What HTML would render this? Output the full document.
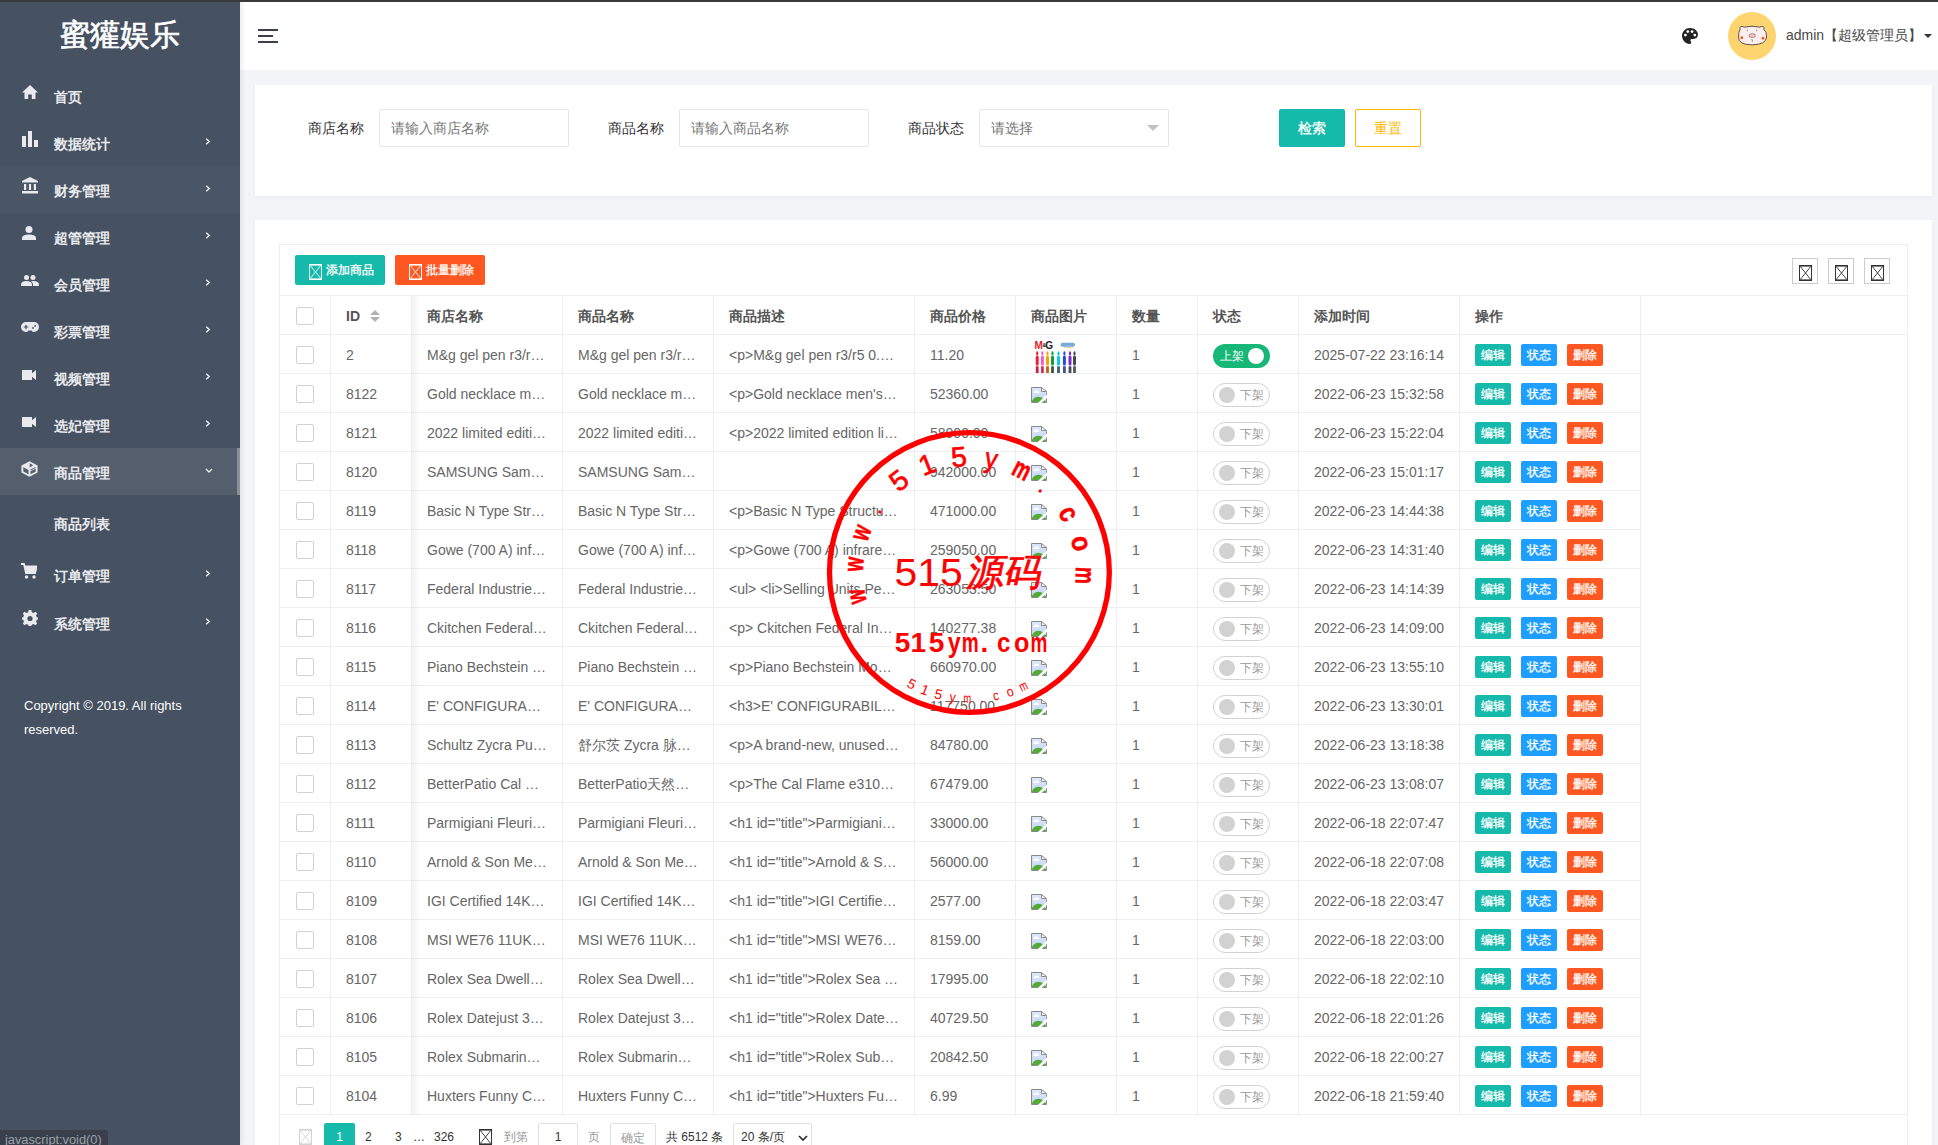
<!DOCTYPE html><html><head><meta charset="utf-8"><style>
*{margin:0;padding:0;box-sizing:border-box}
html,body{width:1938px;height:1145px;overflow:hidden}
body{position:relative;background:#f2f4f8;font-family:"Liberation Sans",sans-serif;font-size:14px;color:#666}
.abs{position:absolute}
#topbar{position:absolute;left:0;top:0;width:1938px;height:2px;background:#3a3a3a;z-index:50}
#side{position:absolute;left:0;top:0;width:240px;height:1145px;background:#465161;box-shadow:2px 0 5px rgba(0,0,0,.08);z-index:10}
#logo{position:absolute;left:0;top:13px;width:240px;text-align:center;color:#fff;font-size:30px;line-height:44px;-webkit-text-stroke:0.7px #fff}
.mi{position:absolute;left:0;width:240px;height:47px;color:#e8eaed;font-weight:bold;font-size:14px}
.mi .tx{position:absolute;left:54px;top:2px;line-height:47px;height:47px}
.mi .ic{position:absolute;left:22px}
.mi .ch{position:absolute;left:205px}
#hdr{position:absolute;left:240px;top:0;width:1698px;height:70px;background:#fff}
.card{position:absolute;background:#fff;box-shadow:0 1px 3px rgba(0,0,0,.05)}
.lbl{position:absolute;color:#333;font-size:14px;line-height:38px;top:109px}
.inp{position:absolute;top:109px;height:38px;width:190px;border:1px solid #e6e6e6;border-radius:2px;background:#fff;color:#777;line-height:36px;padding-left:11px;font-size:14px}
.btn{position:absolute;border-radius:2px;color:#fff;text-align:center;-webkit-text-stroke:0.3px currentColor}
.tb{position:absolute;left:279px;top:244px;width:1629px;height:920px;border:1px solid #eee;background:#fff}
.row{position:absolute;left:0;height:39px;border-bottom:1px solid #eee}
.c{position:absolute;top:0;height:38px;border-right:1px solid #eee;line-height:28px;padding:6px 15px;white-space:nowrap;overflow:hidden;font-size:14px;color:#666}
.th{font-weight:bold;color:#555}
.cb{position:absolute;left:16px;top:11px;width:18px;height:18px;border:1px solid #d2d2d2;border-radius:2px;background:#fff}
.sw{position:absolute;left:15px;top:9px;width:57px;height:24px;border-radius:20px;font-size:12px;line-height:22px}
.sw.on{background:#16b777;color:#fff}
.sw.off{border:1px solid #d2d2d2;color:#999}
.knob{position:absolute;top:4px;width:16px;height:16px;border-radius:50%}
.xs{position:absolute;top:9px;width:36px;height:22px;line-height:22px;font-size:12px;color:#fff;border-radius:2px;text-align:center;-webkit-text-stroke:0.3px #fff}
.pg{position:absolute;font-size:12px;color:#333;line-height:28px;top:1123px}
</style></head><body>
<div id="topbar"></div>
<div id="side">
<div id="logo">蜜獾娱乐</div>
<div class="abs" style="left:0;top:166px;width:240px;height:47px;background:#4a5566"></div>
<div class="abs" style="left:0;top:448px;width:240px;height:47px;background:#555e6d"></div>
<div class="abs" style="left:237px;top:448px;width:3px;height:47px;background:#8a919b"></div>
<div class="mi" style="top:72px"><div class="ic" style="top:13px;left:22px;line-height:0"><svg width="16" height="14" viewBox="0 0 16 14"><path d="M8 0L16 7.5H13.5V14H9.8V9.5H6.2V14H2.5V7.5H0Z" fill="#e8eaed"/></svg></div><div class="tx">首页</div>
</div>
<div class="mi" style="top:119px"><div class="ic" style="top:12px;left:22px;line-height:0"><svg width="16" height="16" viewBox="0 0 16 16"><rect x="0" y="5" width="4" height="11" fill="#e8eaed"/><rect x="6" y="0" width="4" height="16" fill="#e8eaed"/><rect x="12" y="9" width="4" height="7" fill="#e8eaed"/></svg></div><div class="tx">数据统计</div>
<div class="ch" style="left:205px;top:19px;line-height:0"><svg width="6" height="7" viewBox="0 0 6 7"><path d="M1.2 0.8L4.2 3.5L1.2 6.2" fill="none" stroke="#e8eaed" stroke-width="1.5"/></svg></div>
</div>
<div class="mi" style="top:166px"><div class="ic" style="top:11px;left:22px;line-height:0"><svg width="16" height="17" viewBox="0 0 16 17"><path d="M8 0L16 4V5.5H0V4Z" fill="#e8eaed"/><rect x="2" y="7" width="2.2" height="6" fill="#e8eaed"/><rect x="6.9" y="7" width="2.2" height="6" fill="#e8eaed"/><rect x="11.8" y="7" width="2.2" height="6" fill="#e8eaed"/><rect x="0" y="14" width="16" height="2.5" fill="#e8eaed"/></svg></div><div class="tx">财务管理</div>
<div class="ch" style="left:205px;top:19px;line-height:0"><svg width="6" height="7" viewBox="0 0 6 7"><path d="M1.2 0.8L4.2 3.5L1.2 6.2" fill="none" stroke="#e8eaed" stroke-width="1.5"/></svg></div>
</div>
<div class="mi" style="top:213px"><div class="ic" style="top:13px;left:22px;line-height:0"><svg width="14" height="14" viewBox="0 0 14 14"><circle cx="7" cy="3.5" r="3.5" fill="#e8eaed"/><path d="M0 14V12Q0 8.5 7 8.5Q14 8.5 14 12V14Z" fill="#e8eaed"/></svg></div><div class="tx">超管管理</div>
<div class="ch" style="left:205px;top:19px;line-height:0"><svg width="6" height="7" viewBox="0 0 6 7"><path d="M1.2 0.8L4.2 3.5L1.2 6.2" fill="none" stroke="#e8eaed" stroke-width="1.5"/></svg></div>
</div>
<div class="mi" style="top:260px"><div class="ic" style="top:15px;left:21px;line-height:0"><svg width="18" height="11" viewBox="0 0 18 11"><circle cx="5.5" cy="2.5" r="2.5" fill="#e8eaed"/><circle cx="12" cy="2.5" r="2.5" fill="#e8eaed"/><path d="M0 11V9.5Q0 6 5.5 6Q11 6 11 9.5V11Z" fill="#e8eaed"/><path d="M10 6.3Q11 6 12 6Q18 6 18 9.5V11H12V9.5Q12 7.5 10 6.3Z" fill="#e8eaed"/></svg></div><div class="tx">会员管理</div>
<div class="ch" style="left:205px;top:19px;line-height:0"><svg width="6" height="7" viewBox="0 0 6 7"><path d="M1.2 0.8L4.2 3.5L1.2 6.2" fill="none" stroke="#e8eaed" stroke-width="1.5"/></svg></div>
</div>
<div class="mi" style="top:307px"><div class="ic" style="top:15.300000000000011px;left:21px;line-height:0"><svg width="18" height="10" viewBox="0 0 18 10"><path d="M5 0H13A5 5 0 0 1 13 10Q11.5 10 10.5 8.5H7.5Q6.5 10 5 10A5 5 0 0 1 5 0Z" fill="#e8eaed"/><path d="M2.8 5H7.2M5 2.8V7.2" stroke="#465161" stroke-width="1.2"/><circle cx="12" cy="6" r="0.9" fill="#465161"/><circle cx="14.2" cy="3.9" r="0.9" fill="#465161"/></svg></div><div class="tx">彩票管理</div>
<div class="ch" style="left:205px;top:19px;line-height:0"><svg width="6" height="7" viewBox="0 0 6 7"><path d="M1.2 0.8L4.2 3.5L1.2 6.2" fill="none" stroke="#e8eaed" stroke-width="1.5"/></svg></div>
</div>
<div class="mi" style="top:354px"><div class="ic" style="top:16px;left:22px;line-height:0"><svg width="14" height="10" viewBox="0 0 14 10"><rect x="0" y="0" width="10" height="10" fill="#e8eaed"/><path d="M9 4L14 0V10L9 6Z" fill="#e8eaed"/></svg></div><div class="tx">视频管理</div>
<div class="ch" style="left:205px;top:19px;line-height:0"><svg width="6" height="7" viewBox="0 0 6 7"><path d="M1.2 0.8L4.2 3.5L1.2 6.2" fill="none" stroke="#e8eaed" stroke-width="1.5"/></svg></div>
</div>
<div class="mi" style="top:401px"><div class="ic" style="top:16px;left:22px;line-height:0"><svg width="14" height="10" viewBox="0 0 14 10"><rect x="0" y="0" width="10" height="10" fill="#e8eaed"/><path d="M9 4L14 0V10L9 6Z" fill="#e8eaed"/></svg></div><div class="tx">选妃管理</div>
<div class="ch" style="left:205px;top:19px;line-height:0"><svg width="6" height="7" viewBox="0 0 6 7"><path d="M1.2 0.8L4.2 3.5L1.2 6.2" fill="none" stroke="#e8eaed" stroke-width="1.5"/></svg></div>
</div>
<div class="mi" style="top:448px"><div class="ic" style="top:12.5px;left:21px;line-height:0"><svg width="17" height="16" viewBox="0 0 17 16"><path d="M8.5 0.3L16.6 4.4V11.6L8.5 15.7L0.4 11.6V4.4Z" fill="#e8eaed"/><path d="M2.3 6.3L7.5 8.9V13.2L2.3 10.6Z" fill="#555e6d"/><path d="M9.5 10.3L14.6 7.7V10.7L9.5 13.3Z" fill="#555e6d"/><path d="M9.5 8.6L14.6 6V6.9L9.5 9.5Z" fill="#555e6d"/><path d="M8.7 2.2L12.3 4.3L8.7 6.5Z" fill="#555e6d"/></svg></div><div class="tx">商品管理</div>
<div class="ch" style="left:205px;top:20px;line-height:0"><svg width="8" height="5" viewBox="0 0 8 5"><path d="M1 1L4 4L7 1" fill="none" stroke="#e8eaed" stroke-width="1.4"/></svg></div>
</div>
<div class="mi" style="top:551px"><div class="ic" style="top:12px;left:21px;line-height:0"><svg width="16" height="16" viewBox="0 0 16 16"><path d="M0 1H3L5 10H14L16 3.5H4" fill="none" stroke="#e8eaed" stroke-width="1.8"/><path d="M4 3.5H15.5L13.5 9H5Z" fill="#e8eaed"/><circle cx="5.5" cy="14" r="1.7" fill="#e8eaed"/><circle cx="13" cy="14" r="1.7" fill="#e8eaed"/></svg></div><div class="tx">订单管理</div>
<div class="ch" style="left:205px;top:19px;line-height:0"><svg width="6" height="7" viewBox="0 0 6 7"><path d="M1.2 0.8L4.2 3.5L1.2 6.2" fill="none" stroke="#e8eaed" stroke-width="1.5"/></svg></div>
</div>
<div class="mi" style="top:598.5px"><div class="ic" style="top:11.5px;left:22px;line-height:0"><svg width="16" height="16" viewBox="0 0 16 16"><path d="M6.6 0H9.4L9.8 2.2L11.6 3L13.5 1.8L15.2 3.6L14 5.4L14.8 7.2L16 7.5V9.5L14.8 9.8L14 11.6L15.2 13.4L13.5 15.2L11.6 14L9.8 14.8L9.4 16H6.6L6.2 14.8L4.4 14L2.5 15.2L0.8 13.4L2 11.6L1.2 9.8L0 9.5V7.5L1.2 7.2L2 5.4L0.8 3.6L2.5 1.8L4.4 3L6.2 2.2Z" fill="#e8eaed"/><circle cx="8" cy="8.5" r="2.6" fill="#465161"/></svg></div><div class="tx">系统管理</div>
<div class="ch" style="left:205px;top:19px;line-height:0"><svg width="6" height="7" viewBox="0 0 6 7"><path d="M1.2 0.8L4.2 3.5L1.2 6.2" fill="none" stroke="#e8eaed" stroke-width="1.5"/></svg></div>
</div>
<div class="mi" style="top:499px;height:47px"><div class="tx">商品列表</div></div>
<div class="abs" style="left:24px;top:694px;width:200px;color:#fff;font-size:13px;line-height:24px">Copyright © 2019. All rights reserved.</div>
<div class="abs" style="left:0;top:1130px;width:108px;height:15px;background:#39404b;border-top-right-radius:3px;color:#9aa0a8;font-size:12.8px;line-height:15px;padding-left:5px;padding-top:2px;overflow:hidden;white-space:nowrap">javascript:void(0)</div>
</div>
<div id="hdr">
<div class="abs" style="left:18px;top:29px;width:20px;height:2px;background:#3b414b"></div>
<div class="abs" style="left:18px;top:35px;width:15px;height:2px;background:#3b414b"></div>
<div class="abs" style="left:18px;top:41px;width:20px;height:2px;background:#3b414b"></div>
<div class="abs" style="left:1442px;top:28px;line-height:0"><svg width="16" height="16" viewBox="0 0 16 16"><path d="M8 0C3.6 0 0 3.4 0 7.8C0 12.2 3.6 16 7.6 16C8.6 16 9.2 15.3 9.2 14.5C9.2 14 9 13.7 8.8 13.4C8.6 13.1 8.4 12.8 8.4 12.4C8.4 11.6 9 11 9.8 11H11.6C14.1 11 16 9.1 16 6.6C16 2.9 12.4 0 8 0Z" fill="#222"/><circle cx="3.4" cy="7.1" r="1.4" fill="#fff"/><circle cx="5.8" cy="3.6" r="1.4" fill="#fff"/><circle cx="10.1" cy="3.6" r="1.4" fill="#fff"/><circle cx="12.8" cy="7.1" r="1.4" fill="#fff"/></svg></div>
<div class="abs" style="left:1488px;top:12px;width:48px;height:48px;border-radius:50%;background:#fdd46f;overflow:hidden"><svg width="48" height="48" viewBox="0 0 48 48"><path d="M12.2 17.2Q11 15.2 13 14.6Q15 14.2 16.3 15.2Q24 13.2 31.7 15.2Q33 14.2 35 14.6Q37 15.2 35.8 17.2Q38.8 20 38.6 25Q38.2 32.6 24 32.9Q9.8 32.6 10.6 25Q10.4 20 12.2 17.2Z" fill="#fbeeee" stroke="#3a3030" stroke-width="0.8"/><path d="M19.5 17.6V19.2M28.6 17.6V19.2" stroke="#555" stroke-width="0.6"/><rect x="21" y="21.8" width="6.4" height="3.6" rx="1.8" fill="#f4c0c2" stroke="#6a5050" stroke-width="0.5"/><circle cx="13.8" cy="25.8" r="1.45" fill="#f05a28"/><circle cx="35" cy="26.2" r="1.45" fill="#f05a28"/><path d="M23.4 27.6Q24.6 27.4 24.4 28.6Q24.2 29.6 24.8 30" fill="none" stroke="#555" stroke-width="0.6"/></svg></div>
<div class="abs" style="left:1546px;top:25px;line-height:20px;color:#484848;font-size:14px;white-space:nowrap">admin【超级管理员】</div>
<div class="abs" style="left:1684px;top:34px;width:0;height:0;border-left:4px solid transparent;border-right:4px solid transparent;border-top:4px solid #333"></div>
</div>
<div class="card" style="left:255px;top:85px;width:1677px;height:111px"></div>
<div class="lbl" style="left:308px">商店名称</div>
<div class="inp" style="left:379px">请输入商店名称</div>
<div class="lbl" style="left:608px">商品名称</div>
<div class="inp" style="left:679px">请输入商品名称</div>
<div class="lbl" style="left:908px">商品状态</div>
<div class="inp" style="left:979px">请选择</div>
<div class="abs" style="left:1147px;top:125px;width:0;height:0;border-left:6px solid transparent;border-right:6px solid transparent;border-top:6px solid #c2c2c2"></div>
<div class="btn" style="left:1279px;top:109px;width:66px;height:38px;line-height:39px;background:#16baaa;font-size:14px">检索</div>
<div class="btn" style="left:1355px;top:109px;width:66px;height:38px;line-height:37px;border:1px solid #ffb800;color:#ffb800;background:#fff;font-size:14px;-webkit-text-stroke:0">重置</div>
<div class="card" style="left:255px;top:220px;width:1677px;height:940px"></div>
<div class="tb">
<div class="btn" style="left:15px;top:10px;width:90px;height:30px;background:#16baaa;font-size:12px"><div class="abs" style="left:14px;top:9px"><svg width="13" height="16" viewBox="0 0 13 16" style="display:block"><rect x="0" y="0" width="13" height="1.6" fill="#fff"/><rect x="0" y="14.4" width="13" height="1.6" fill="#fff"/><rect x="0" y="0" width="1" height="16" fill="#fff"/><rect x="12" y="0" width="1" height="16" fill="#fff"/><path d="M1 1.2L12 14.8M12 1.2L1 14.8" stroke="#fff" stroke-width="0.9"/></svg></div><div class="abs" style="left:31px;top:0;line-height:30px">添加商品</div></div>
<div class="btn" style="left:115px;top:10px;width:90px;height:30px;background:#ff5722;font-size:12px"><div class="abs" style="left:14px;top:9px"><svg width="13" height="16" viewBox="0 0 13 16" style="display:block"><rect x="0" y="0" width="13" height="1.6" fill="#fff"/><rect x="0" y="14.4" width="13" height="1.6" fill="#fff"/><rect x="0" y="0" width="1" height="16" fill="#fff"/><rect x="12" y="0" width="1" height="16" fill="#fff"/><path d="M1 1.2L12 14.8M12 1.2L1 14.8" stroke="#fff" stroke-width="0.9"/></svg></div><div class="abs" style="left:31px;top:0;line-height:30px">批量删除</div></div>
<div class="abs" style="left:1512px;top:13px;width:26px;height:26px;border:1px solid #ccc"><div class="abs" style="left:6px;top:6px"><svg width="13" height="16" viewBox="0 0 13 16" style="display:block"><rect x="0" y="0" width="13" height="1.6" fill="#333"/><rect x="0" y="14.4" width="13" height="1.6" fill="#333"/><rect x="0" y="0" width="1" height="16" fill="#333"/><rect x="12" y="0" width="1" height="16" fill="#333"/><path d="M1 1.2L12 14.8M12 1.2L1 14.8" stroke="#333" stroke-width="0.9"/></svg></div></div>
<div class="abs" style="left:1548px;top:13px;width:26px;height:26px;border:1px solid #ccc"><div class="abs" style="left:6px;top:6px"><svg width="13" height="16" viewBox="0 0 13 16" style="display:block"><rect x="0" y="0" width="13" height="1.6" fill="#333"/><rect x="0" y="14.4" width="13" height="1.6" fill="#333"/><rect x="0" y="0" width="1" height="16" fill="#333"/><rect x="12" y="0" width="1" height="16" fill="#333"/><path d="M1 1.2L12 14.8M12 1.2L1 14.8" stroke="#333" stroke-width="0.9"/></svg></div></div>
<div class="abs" style="left:1584px;top:13px;width:26px;height:26px;border:1px solid #ccc"><div class="abs" style="left:6px;top:6px"><svg width="13" height="16" viewBox="0 0 13 16" style="display:block"><rect x="0" y="0" width="13" height="1.6" fill="#333"/><rect x="0" y="14.4" width="13" height="1.6" fill="#333"/><rect x="0" y="0" width="1" height="16" fill="#333"/><rect x="12" y="0" width="1" height="16" fill="#333"/><path d="M1 1.2L12 14.8M12 1.2L1 14.8" stroke="#333" stroke-width="0.9"/></svg></div></div>
<div class="row" style="top:50px;width:1627px;border-top:1px solid #eee;height:40px">
<div class="c" style="left:0px;width:51px"><div class="cb"></div></div>
<div class="c th" style="left:51px;width:81px">ID<svg class="abs" style="left:39px;top:14px" width="10" height="12" viewBox="0 0 10 12"><path d="M0 5L5 0L10 5Z" fill="#b2b2b2"/><path d="M0 7L5 12L10 7Z" fill="#b2b2b2"/></svg></div>
<div class="c th" style="left:132px;width:151px">商店名称</div>
<div class="c th" style="left:283px;width:151px">商品名称</div>
<div class="c th" style="left:434px;width:201px">商品描述</div>
<div class="c th" style="left:635px;width:101px">商品价格</div>
<div class="c th" style="left:736px;width:101px">商品图片</div>
<div class="c th" style="left:837px;width:81px">数量</div>
<div class="c th" style="left:918px;width:101px">状态</div>
<div class="c th" style="left:1019px;width:161px">添加时间</div>
<div class="c th" style="left:1180px;width:181px">操作</div>
</div>
<div class="row" style="top:90px;width:1361px">
<div class="c" style="left:0px;width:51px"><div class="cb"></div></div>
<div class="c" style="left:51px;width:81px">2</div>
<div class="c" style="left:132px;width:151px">M&g gel pen r3/r…</div>
<div class="c" style="left:283px;width:151px">M&g gel pen r3/r…</div>
<div class="c" style="left:434px;width:201px">&lt;p&gt;M&amp;g gel pen r3/r5 0.…</div>
<div class="c" style="left:635px;width:101px">11.20</div>
<div class="c" style="left:736px;width:101px"><div class="abs" style="left:15px;top:3px;line-height:0;overflow:hidden;height:35px"><svg width="50" height="35" viewBox="0 0 50 35"><text x="3.6" y="11" font-family="Liberation Sans" font-weight="bold" font-size="10" fill="#e8202a">M</text><text x="11.6" y="9" font-family="Liberation Sans" font-weight="bold" font-size="5" fill="#222">&amp;</text><text x="14.2" y="11" font-family="Liberation Sans" font-weight="bold" font-size="10" fill="#222">G</text><rect x="29.5" y="4.8" width="14.5" height="4" rx="2" fill="#4a90d0" opacity=".75"/><rect x="33" y="9" width="9" height="0.9" fill="#f0a040" opacity=".6"/><ellipse cx="6.2" cy="15.5" rx="1.1" ry="2.3" fill="#e8203a"/><rect x="4.7" y="18" width="3" height="9" rx="1" fill="#e8203a"/><rect x="5.1" y="26.5" width="2.2" height="2.5" fill="#e8203a" opacity=".5"/><rect x="4.800000000000001" y="28.5" width="2.8" height="6.5" fill="#d02040"/><ellipse cx="11.4" cy="15.5" rx="1.1" ry="2.3" fill="#f060c8"/><rect x="9.9" y="18" width="3" height="9" rx="1" fill="#f060c8"/><rect x="10.3" y="26.5" width="2.2" height="2.5" fill="#f060c8" opacity=".5"/><rect x="10.0" y="28.5" width="2.8" height="6.5" fill="#d03060"/><ellipse cx="16.5" cy="15.5" rx="1.1" ry="2.3" fill="#f0a800"/><rect x="15.0" y="18" width="3" height="9" rx="1" fill="#f0a800"/><rect x="15.4" y="26.5" width="2.2" height="2.5" fill="#f0a800" opacity=".5"/><rect x="15.1" y="28.5" width="2.8" height="6.5" fill="#c06010"/><ellipse cx="21.5" cy="15.5" rx="1.1" ry="2.3" fill="#10a040"/><rect x="20.0" y="18" width="3" height="9" rx="1" fill="#10a040"/><rect x="20.4" y="26.5" width="2.2" height="2.5" fill="#10a040" opacity=".5"/><rect x="20.1" y="28.5" width="2.8" height="6.5" fill="#405048"/><ellipse cx="27.5" cy="15.5" rx="1.1" ry="2.3" fill="#10c8e8"/><rect x="26.0" y="18" width="3" height="9" rx="1" fill="#10c8e8"/><rect x="26.4" y="26.5" width="2.2" height="2.5" fill="#10c8e8" opacity=".5"/><rect x="26.1" y="28.5" width="2.8" height="6.5" fill="#406068"/><ellipse cx="33.4" cy="15.5" rx="1.1" ry="2.3" fill="#2848d8"/><rect x="31.9" y="18" width="3" height="9" rx="1" fill="#2848d8"/><rect x="32.3" y="26.5" width="2.2" height="2.5" fill="#2848d8" opacity=".5"/><rect x="32.0" y="28.5" width="2.8" height="6.5" fill="#405090"/><ellipse cx="39" cy="15.5" rx="1.1" ry="2.3" fill="#7828d0"/><rect x="37.5" y="18" width="3" height="9" rx="1" fill="#7828d0"/><rect x="37.9" y="26.5" width="2.2" height="2.5" fill="#7828d0" opacity=".5"/><rect x="37.6" y="28.5" width="2.8" height="6.5" fill="#484858"/><ellipse cx="43.5" cy="15.5" rx="1.1" ry="2.3" fill="#404858"/><rect x="42.0" y="18" width="3" height="9" rx="1" fill="#404858"/><rect x="42.4" y="26.5" width="2.2" height="2.5" fill="#404858" opacity=".5"/><rect x="42.1" y="28.5" width="2.8" height="6.5" fill="#505860"/></svg></div></div>
<div class="c" style="left:837px;width:81px">1</div>
<div class="c" style="left:918px;width:101px"><div class="sw on"><span class="abs" style="left:7px;top:1px">上架</span><div class="knob" style="left:35px;background:#fff"></div></div></div>
<div class="c" style="left:1019px;width:161px">2025-07-22 23:16:14</div>
<div class="c" style="left:1180px;width:181px"><div class="xs" style="left:15px;background:#16baaa">编辑</div><div class="xs" style="left:61px;background:#1e9fff">状态</div><div class="xs" style="left:107px;background:#ff5722">删除</div></div>
</div>
<div class="row" style="top:129px;width:1361px">
<div class="c" style="left:0px;width:51px"><div class="cb"></div></div>
<div class="c" style="left:51px;width:81px">8122</div>
<div class="c" style="left:132px;width:151px">Gold necklace m…</div>
<div class="c" style="left:283px;width:151px">Gold necklace m…</div>
<div class="c" style="left:434px;width:201px">&lt;p&gt;Gold necklace men's…</div>
<div class="c" style="left:635px;width:101px">52360.00</div>
<div class="c" style="left:736px;width:101px"><div class="abs" style="left:15px;top:13px;line-height:0"><svg width="17" height="17" viewBox="0 0 17 17" style="display:block"><defs><linearGradient id="sky" x1="0" y1="0" x2="0" y2="1"><stop offset="0" stop-color="#dde8fb"/><stop offset="1" stop-color="#c2d4f2"/></linearGradient></defs><path d="M0.5 0.5H10.5L15.5 5.5V15.5H0.5Z" fill="url(#sky)" stroke="#8a8a8a" stroke-width="1"/><path d="M10.5 0.5V4.5H15.5Z" fill="#fff" stroke="#8a8a8a" stroke-width="1"/><path d="M2.2 6H8.3Q7.8 3.5 6.2 3.6Q5.2 2.6 4 4Q2.8 4.5 2.2 6Z" fill="#fff"/><path d="M1 15V14Q3.5 9.8 7.5 9.8Q10.5 9.8 12.5 12V15Z" fill="#52ab34"/><path d="M11 15Q13 12.5 15 14.2V15Z" fill="#52ab34"/><path d="M6.4 16.6L16.6 6.8V10.2L10 16.6Z" fill="#fff"/></svg></div></div>
<div class="c" style="left:837px;width:81px">1</div>
<div class="c" style="left:918px;width:101px"><div class="sw off"><div class="knob" style="left:5px;top:3px;background:#d2d2d2"></div><span class="abs" style="left:26px;top:0">下架</span></div></div>
<div class="c" style="left:1019px;width:161px">2022-06-23 15:32:58</div>
<div class="c" style="left:1180px;width:181px"><div class="xs" style="left:15px;background:#16baaa">编辑</div><div class="xs" style="left:61px;background:#1e9fff">状态</div><div class="xs" style="left:107px;background:#ff5722">删除</div></div>
</div>
<div class="row" style="top:168px;width:1361px">
<div class="c" style="left:0px;width:51px"><div class="cb"></div></div>
<div class="c" style="left:51px;width:81px">8121</div>
<div class="c" style="left:132px;width:151px">2022 limited editi…</div>
<div class="c" style="left:283px;width:151px">2022 limited editi…</div>
<div class="c" style="left:434px;width:201px">&lt;p&gt;2022 limited edition li…</div>
<div class="c" style="left:635px;width:101px">58000.00</div>
<div class="c" style="left:736px;width:101px"><div class="abs" style="left:15px;top:13px;line-height:0"><svg width="17" height="17" viewBox="0 0 17 17" style="display:block"><defs><linearGradient id="sky" x1="0" y1="0" x2="0" y2="1"><stop offset="0" stop-color="#dde8fb"/><stop offset="1" stop-color="#c2d4f2"/></linearGradient></defs><path d="M0.5 0.5H10.5L15.5 5.5V15.5H0.5Z" fill="url(#sky)" stroke="#8a8a8a" stroke-width="1"/><path d="M10.5 0.5V4.5H15.5Z" fill="#fff" stroke="#8a8a8a" stroke-width="1"/><path d="M2.2 6H8.3Q7.8 3.5 6.2 3.6Q5.2 2.6 4 4Q2.8 4.5 2.2 6Z" fill="#fff"/><path d="M1 15V14Q3.5 9.8 7.5 9.8Q10.5 9.8 12.5 12V15Z" fill="#52ab34"/><path d="M11 15Q13 12.5 15 14.2V15Z" fill="#52ab34"/><path d="M6.4 16.6L16.6 6.8V10.2L10 16.6Z" fill="#fff"/></svg></div></div>
<div class="c" style="left:837px;width:81px">1</div>
<div class="c" style="left:918px;width:101px"><div class="sw off"><div class="knob" style="left:5px;top:3px;background:#d2d2d2"></div><span class="abs" style="left:26px;top:0">下架</span></div></div>
<div class="c" style="left:1019px;width:161px">2022-06-23 15:22:04</div>
<div class="c" style="left:1180px;width:181px"><div class="xs" style="left:15px;background:#16baaa">编辑</div><div class="xs" style="left:61px;background:#1e9fff">状态</div><div class="xs" style="left:107px;background:#ff5722">删除</div></div>
</div>
<div class="row" style="top:207px;width:1361px">
<div class="c" style="left:0px;width:51px"><div class="cb"></div></div>
<div class="c" style="left:51px;width:81px">8120</div>
<div class="c" style="left:132px;width:151px">SAMSUNG Sam…</div>
<div class="c" style="left:283px;width:151px">SAMSUNG Sam…</div>
<div class="c" style="left:434px;width:201px"></div>
<div class="c" style="left:635px;width:101px">942000.00</div>
<div class="c" style="left:736px;width:101px"><div class="abs" style="left:15px;top:13px;line-height:0"><svg width="17" height="17" viewBox="0 0 17 17" style="display:block"><defs><linearGradient id="sky" x1="0" y1="0" x2="0" y2="1"><stop offset="0" stop-color="#dde8fb"/><stop offset="1" stop-color="#c2d4f2"/></linearGradient></defs><path d="M0.5 0.5H10.5L15.5 5.5V15.5H0.5Z" fill="url(#sky)" stroke="#8a8a8a" stroke-width="1"/><path d="M10.5 0.5V4.5H15.5Z" fill="#fff" stroke="#8a8a8a" stroke-width="1"/><path d="M2.2 6H8.3Q7.8 3.5 6.2 3.6Q5.2 2.6 4 4Q2.8 4.5 2.2 6Z" fill="#fff"/><path d="M1 15V14Q3.5 9.8 7.5 9.8Q10.5 9.8 12.5 12V15Z" fill="#52ab34"/><path d="M11 15Q13 12.5 15 14.2V15Z" fill="#52ab34"/><path d="M6.4 16.6L16.6 6.8V10.2L10 16.6Z" fill="#fff"/></svg></div></div>
<div class="c" style="left:837px;width:81px">1</div>
<div class="c" style="left:918px;width:101px"><div class="sw off"><div class="knob" style="left:5px;top:3px;background:#d2d2d2"></div><span class="abs" style="left:26px;top:0">下架</span></div></div>
<div class="c" style="left:1019px;width:161px">2022-06-23 15:01:17</div>
<div class="c" style="left:1180px;width:181px"><div class="xs" style="left:15px;background:#16baaa">编辑</div><div class="xs" style="left:61px;background:#1e9fff">状态</div><div class="xs" style="left:107px;background:#ff5722">删除</div></div>
</div>
<div class="row" style="top:246px;width:1361px">
<div class="c" style="left:0px;width:51px"><div class="cb"></div></div>
<div class="c" style="left:51px;width:81px">8119</div>
<div class="c" style="left:132px;width:151px">Basic N Type Str…</div>
<div class="c" style="left:283px;width:151px">Basic N Type Str…</div>
<div class="c" style="left:434px;width:201px">&lt;p&gt;Basic N Type Structu…</div>
<div class="c" style="left:635px;width:101px">471000.00</div>
<div class="c" style="left:736px;width:101px"><div class="abs" style="left:15px;top:13px;line-height:0"><svg width="17" height="17" viewBox="0 0 17 17" style="display:block"><defs><linearGradient id="sky" x1="0" y1="0" x2="0" y2="1"><stop offset="0" stop-color="#dde8fb"/><stop offset="1" stop-color="#c2d4f2"/></linearGradient></defs><path d="M0.5 0.5H10.5L15.5 5.5V15.5H0.5Z" fill="url(#sky)" stroke="#8a8a8a" stroke-width="1"/><path d="M10.5 0.5V4.5H15.5Z" fill="#fff" stroke="#8a8a8a" stroke-width="1"/><path d="M2.2 6H8.3Q7.8 3.5 6.2 3.6Q5.2 2.6 4 4Q2.8 4.5 2.2 6Z" fill="#fff"/><path d="M1 15V14Q3.5 9.8 7.5 9.8Q10.5 9.8 12.5 12V15Z" fill="#52ab34"/><path d="M11 15Q13 12.5 15 14.2V15Z" fill="#52ab34"/><path d="M6.4 16.6L16.6 6.8V10.2L10 16.6Z" fill="#fff"/></svg></div></div>
<div class="c" style="left:837px;width:81px">1</div>
<div class="c" style="left:918px;width:101px"><div class="sw off"><div class="knob" style="left:5px;top:3px;background:#d2d2d2"></div><span class="abs" style="left:26px;top:0">下架</span></div></div>
<div class="c" style="left:1019px;width:161px">2022-06-23 14:44:38</div>
<div class="c" style="left:1180px;width:181px"><div class="xs" style="left:15px;background:#16baaa">编辑</div><div class="xs" style="left:61px;background:#1e9fff">状态</div><div class="xs" style="left:107px;background:#ff5722">删除</div></div>
</div>
<div class="row" style="top:285px;width:1361px">
<div class="c" style="left:0px;width:51px"><div class="cb"></div></div>
<div class="c" style="left:51px;width:81px">8118</div>
<div class="c" style="left:132px;width:151px">Gowe (700 A) inf…</div>
<div class="c" style="left:283px;width:151px">Gowe (700 A) inf…</div>
<div class="c" style="left:434px;width:201px">&lt;p&gt;Gowe (700 A) infrare…</div>
<div class="c" style="left:635px;width:101px">259050.00</div>
<div class="c" style="left:736px;width:101px"><div class="abs" style="left:15px;top:13px;line-height:0"><svg width="17" height="17" viewBox="0 0 17 17" style="display:block"><defs><linearGradient id="sky" x1="0" y1="0" x2="0" y2="1"><stop offset="0" stop-color="#dde8fb"/><stop offset="1" stop-color="#c2d4f2"/></linearGradient></defs><path d="M0.5 0.5H10.5L15.5 5.5V15.5H0.5Z" fill="url(#sky)" stroke="#8a8a8a" stroke-width="1"/><path d="M10.5 0.5V4.5H15.5Z" fill="#fff" stroke="#8a8a8a" stroke-width="1"/><path d="M2.2 6H8.3Q7.8 3.5 6.2 3.6Q5.2 2.6 4 4Q2.8 4.5 2.2 6Z" fill="#fff"/><path d="M1 15V14Q3.5 9.8 7.5 9.8Q10.5 9.8 12.5 12V15Z" fill="#52ab34"/><path d="M11 15Q13 12.5 15 14.2V15Z" fill="#52ab34"/><path d="M6.4 16.6L16.6 6.8V10.2L10 16.6Z" fill="#fff"/></svg></div></div>
<div class="c" style="left:837px;width:81px">1</div>
<div class="c" style="left:918px;width:101px"><div class="sw off"><div class="knob" style="left:5px;top:3px;background:#d2d2d2"></div><span class="abs" style="left:26px;top:0">下架</span></div></div>
<div class="c" style="left:1019px;width:161px">2022-06-23 14:31:40</div>
<div class="c" style="left:1180px;width:181px"><div class="xs" style="left:15px;background:#16baaa">编辑</div><div class="xs" style="left:61px;background:#1e9fff">状态</div><div class="xs" style="left:107px;background:#ff5722">删除</div></div>
</div>
<div class="row" style="top:324px;width:1361px">
<div class="c" style="left:0px;width:51px"><div class="cb"></div></div>
<div class="c" style="left:51px;width:81px">8117</div>
<div class="c" style="left:132px;width:151px">Federal Industrie…</div>
<div class="c" style="left:283px;width:151px">Federal Industrie…</div>
<div class="c" style="left:434px;width:201px">&lt;ul&gt; &lt;li&gt;Selling Units Pe…</div>
<div class="c" style="left:635px;width:101px">263053.50</div>
<div class="c" style="left:736px;width:101px"><div class="abs" style="left:15px;top:13px;line-height:0"><svg width="17" height="17" viewBox="0 0 17 17" style="display:block"><defs><linearGradient id="sky" x1="0" y1="0" x2="0" y2="1"><stop offset="0" stop-color="#dde8fb"/><stop offset="1" stop-color="#c2d4f2"/></linearGradient></defs><path d="M0.5 0.5H10.5L15.5 5.5V15.5H0.5Z" fill="url(#sky)" stroke="#8a8a8a" stroke-width="1"/><path d="M10.5 0.5V4.5H15.5Z" fill="#fff" stroke="#8a8a8a" stroke-width="1"/><path d="M2.2 6H8.3Q7.8 3.5 6.2 3.6Q5.2 2.6 4 4Q2.8 4.5 2.2 6Z" fill="#fff"/><path d="M1 15V14Q3.5 9.8 7.5 9.8Q10.5 9.8 12.5 12V15Z" fill="#52ab34"/><path d="M11 15Q13 12.5 15 14.2V15Z" fill="#52ab34"/><path d="M6.4 16.6L16.6 6.8V10.2L10 16.6Z" fill="#fff"/></svg></div></div>
<div class="c" style="left:837px;width:81px">1</div>
<div class="c" style="left:918px;width:101px"><div class="sw off"><div class="knob" style="left:5px;top:3px;background:#d2d2d2"></div><span class="abs" style="left:26px;top:0">下架</span></div></div>
<div class="c" style="left:1019px;width:161px">2022-06-23 14:14:39</div>
<div class="c" style="left:1180px;width:181px"><div class="xs" style="left:15px;background:#16baaa">编辑</div><div class="xs" style="left:61px;background:#1e9fff">状态</div><div class="xs" style="left:107px;background:#ff5722">删除</div></div>
</div>
<div class="row" style="top:363px;width:1361px">
<div class="c" style="left:0px;width:51px"><div class="cb"></div></div>
<div class="c" style="left:51px;width:81px">8116</div>
<div class="c" style="left:132px;width:151px">Ckitchen Federal…</div>
<div class="c" style="left:283px;width:151px">Ckitchen Federal…</div>
<div class="c" style="left:434px;width:201px">&lt;p&gt; Ckitchen Federal In…</div>
<div class="c" style="left:635px;width:101px">140277.38</div>
<div class="c" style="left:736px;width:101px"><div class="abs" style="left:15px;top:13px;line-height:0"><svg width="17" height="17" viewBox="0 0 17 17" style="display:block"><defs><linearGradient id="sky" x1="0" y1="0" x2="0" y2="1"><stop offset="0" stop-color="#dde8fb"/><stop offset="1" stop-color="#c2d4f2"/></linearGradient></defs><path d="M0.5 0.5H10.5L15.5 5.5V15.5H0.5Z" fill="url(#sky)" stroke="#8a8a8a" stroke-width="1"/><path d="M10.5 0.5V4.5H15.5Z" fill="#fff" stroke="#8a8a8a" stroke-width="1"/><path d="M2.2 6H8.3Q7.8 3.5 6.2 3.6Q5.2 2.6 4 4Q2.8 4.5 2.2 6Z" fill="#fff"/><path d="M1 15V14Q3.5 9.8 7.5 9.8Q10.5 9.8 12.5 12V15Z" fill="#52ab34"/><path d="M11 15Q13 12.5 15 14.2V15Z" fill="#52ab34"/><path d="M6.4 16.6L16.6 6.8V10.2L10 16.6Z" fill="#fff"/></svg></div></div>
<div class="c" style="left:837px;width:81px">1</div>
<div class="c" style="left:918px;width:101px"><div class="sw off"><div class="knob" style="left:5px;top:3px;background:#d2d2d2"></div><span class="abs" style="left:26px;top:0">下架</span></div></div>
<div class="c" style="left:1019px;width:161px">2022-06-23 14:09:00</div>
<div class="c" style="left:1180px;width:181px"><div class="xs" style="left:15px;background:#16baaa">编辑</div><div class="xs" style="left:61px;background:#1e9fff">状态</div><div class="xs" style="left:107px;background:#ff5722">删除</div></div>
</div>
<div class="row" style="top:402px;width:1361px">
<div class="c" style="left:0px;width:51px"><div class="cb"></div></div>
<div class="c" style="left:51px;width:81px">8115</div>
<div class="c" style="left:132px;width:151px">Piano Bechstein …</div>
<div class="c" style="left:283px;width:151px">Piano Bechstein …</div>
<div class="c" style="left:434px;width:201px">&lt;p&gt;Piano Bechstein Mo…</div>
<div class="c" style="left:635px;width:101px">660970.00</div>
<div class="c" style="left:736px;width:101px"><div class="abs" style="left:15px;top:13px;line-height:0"><svg width="17" height="17" viewBox="0 0 17 17" style="display:block"><defs><linearGradient id="sky" x1="0" y1="0" x2="0" y2="1"><stop offset="0" stop-color="#dde8fb"/><stop offset="1" stop-color="#c2d4f2"/></linearGradient></defs><path d="M0.5 0.5H10.5L15.5 5.5V15.5H0.5Z" fill="url(#sky)" stroke="#8a8a8a" stroke-width="1"/><path d="M10.5 0.5V4.5H15.5Z" fill="#fff" stroke="#8a8a8a" stroke-width="1"/><path d="M2.2 6H8.3Q7.8 3.5 6.2 3.6Q5.2 2.6 4 4Q2.8 4.5 2.2 6Z" fill="#fff"/><path d="M1 15V14Q3.5 9.8 7.5 9.8Q10.5 9.8 12.5 12V15Z" fill="#52ab34"/><path d="M11 15Q13 12.5 15 14.2V15Z" fill="#52ab34"/><path d="M6.4 16.6L16.6 6.8V10.2L10 16.6Z" fill="#fff"/></svg></div></div>
<div class="c" style="left:837px;width:81px">1</div>
<div class="c" style="left:918px;width:101px"><div class="sw off"><div class="knob" style="left:5px;top:3px;background:#d2d2d2"></div><span class="abs" style="left:26px;top:0">下架</span></div></div>
<div class="c" style="left:1019px;width:161px">2022-06-23 13:55:10</div>
<div class="c" style="left:1180px;width:181px"><div class="xs" style="left:15px;background:#16baaa">编辑</div><div class="xs" style="left:61px;background:#1e9fff">状态</div><div class="xs" style="left:107px;background:#ff5722">删除</div></div>
</div>
<div class="row" style="top:441px;width:1361px">
<div class="c" style="left:0px;width:51px"><div class="cb"></div></div>
<div class="c" style="left:51px;width:81px">8114</div>
<div class="c" style="left:132px;width:151px">E' CONFIGURA…</div>
<div class="c" style="left:283px;width:151px">E' CONFIGURA…</div>
<div class="c" style="left:434px;width:201px">&lt;h3&gt;E' CONFIGURABIL…</div>
<div class="c" style="left:635px;width:101px">117750.00</div>
<div class="c" style="left:736px;width:101px"><div class="abs" style="left:15px;top:13px;line-height:0"><svg width="17" height="17" viewBox="0 0 17 17" style="display:block"><defs><linearGradient id="sky" x1="0" y1="0" x2="0" y2="1"><stop offset="0" stop-color="#dde8fb"/><stop offset="1" stop-color="#c2d4f2"/></linearGradient></defs><path d="M0.5 0.5H10.5L15.5 5.5V15.5H0.5Z" fill="url(#sky)" stroke="#8a8a8a" stroke-width="1"/><path d="M10.5 0.5V4.5H15.5Z" fill="#fff" stroke="#8a8a8a" stroke-width="1"/><path d="M2.2 6H8.3Q7.8 3.5 6.2 3.6Q5.2 2.6 4 4Q2.8 4.5 2.2 6Z" fill="#fff"/><path d="M1 15V14Q3.5 9.8 7.5 9.8Q10.5 9.8 12.5 12V15Z" fill="#52ab34"/><path d="M11 15Q13 12.5 15 14.2V15Z" fill="#52ab34"/><path d="M6.4 16.6L16.6 6.8V10.2L10 16.6Z" fill="#fff"/></svg></div></div>
<div class="c" style="left:837px;width:81px">1</div>
<div class="c" style="left:918px;width:101px"><div class="sw off"><div class="knob" style="left:5px;top:3px;background:#d2d2d2"></div><span class="abs" style="left:26px;top:0">下架</span></div></div>
<div class="c" style="left:1019px;width:161px">2022-06-23 13:30:01</div>
<div class="c" style="left:1180px;width:181px"><div class="xs" style="left:15px;background:#16baaa">编辑</div><div class="xs" style="left:61px;background:#1e9fff">状态</div><div class="xs" style="left:107px;background:#ff5722">删除</div></div>
</div>
<div class="row" style="top:480px;width:1361px">
<div class="c" style="left:0px;width:51px"><div class="cb"></div></div>
<div class="c" style="left:51px;width:81px">8113</div>
<div class="c" style="left:132px;width:151px">Schultz Zycra Pu…</div>
<div class="c" style="left:283px;width:151px">舒尔茨 Zycra 脉…</div>
<div class="c" style="left:434px;width:201px">&lt;p&gt;A brand-new, unused…</div>
<div class="c" style="left:635px;width:101px">84780.00</div>
<div class="c" style="left:736px;width:101px"><div class="abs" style="left:15px;top:13px;line-height:0"><svg width="17" height="17" viewBox="0 0 17 17" style="display:block"><defs><linearGradient id="sky" x1="0" y1="0" x2="0" y2="1"><stop offset="0" stop-color="#dde8fb"/><stop offset="1" stop-color="#c2d4f2"/></linearGradient></defs><path d="M0.5 0.5H10.5L15.5 5.5V15.5H0.5Z" fill="url(#sky)" stroke="#8a8a8a" stroke-width="1"/><path d="M10.5 0.5V4.5H15.5Z" fill="#fff" stroke="#8a8a8a" stroke-width="1"/><path d="M2.2 6H8.3Q7.8 3.5 6.2 3.6Q5.2 2.6 4 4Q2.8 4.5 2.2 6Z" fill="#fff"/><path d="M1 15V14Q3.5 9.8 7.5 9.8Q10.5 9.8 12.5 12V15Z" fill="#52ab34"/><path d="M11 15Q13 12.5 15 14.2V15Z" fill="#52ab34"/><path d="M6.4 16.6L16.6 6.8V10.2L10 16.6Z" fill="#fff"/></svg></div></div>
<div class="c" style="left:837px;width:81px">1</div>
<div class="c" style="left:918px;width:101px"><div class="sw off"><div class="knob" style="left:5px;top:3px;background:#d2d2d2"></div><span class="abs" style="left:26px;top:0">下架</span></div></div>
<div class="c" style="left:1019px;width:161px">2022-06-23 13:18:38</div>
<div class="c" style="left:1180px;width:181px"><div class="xs" style="left:15px;background:#16baaa">编辑</div><div class="xs" style="left:61px;background:#1e9fff">状态</div><div class="xs" style="left:107px;background:#ff5722">删除</div></div>
</div>
<div class="row" style="top:519px;width:1361px">
<div class="c" style="left:0px;width:51px"><div class="cb"></div></div>
<div class="c" style="left:51px;width:81px">8112</div>
<div class="c" style="left:132px;width:151px">BetterPatio Cal …</div>
<div class="c" style="left:283px;width:151px">BetterPatio天然…</div>
<div class="c" style="left:434px;width:201px">&lt;p&gt;The Cal Flame e310…</div>
<div class="c" style="left:635px;width:101px">67479.00</div>
<div class="c" style="left:736px;width:101px"><div class="abs" style="left:15px;top:13px;line-height:0"><svg width="17" height="17" viewBox="0 0 17 17" style="display:block"><defs><linearGradient id="sky" x1="0" y1="0" x2="0" y2="1"><stop offset="0" stop-color="#dde8fb"/><stop offset="1" stop-color="#c2d4f2"/></linearGradient></defs><path d="M0.5 0.5H10.5L15.5 5.5V15.5H0.5Z" fill="url(#sky)" stroke="#8a8a8a" stroke-width="1"/><path d="M10.5 0.5V4.5H15.5Z" fill="#fff" stroke="#8a8a8a" stroke-width="1"/><path d="M2.2 6H8.3Q7.8 3.5 6.2 3.6Q5.2 2.6 4 4Q2.8 4.5 2.2 6Z" fill="#fff"/><path d="M1 15V14Q3.5 9.8 7.5 9.8Q10.5 9.8 12.5 12V15Z" fill="#52ab34"/><path d="M11 15Q13 12.5 15 14.2V15Z" fill="#52ab34"/><path d="M6.4 16.6L16.6 6.8V10.2L10 16.6Z" fill="#fff"/></svg></div></div>
<div class="c" style="left:837px;width:81px">1</div>
<div class="c" style="left:918px;width:101px"><div class="sw off"><div class="knob" style="left:5px;top:3px;background:#d2d2d2"></div><span class="abs" style="left:26px;top:0">下架</span></div></div>
<div class="c" style="left:1019px;width:161px">2022-06-23 13:08:07</div>
<div class="c" style="left:1180px;width:181px"><div class="xs" style="left:15px;background:#16baaa">编辑</div><div class="xs" style="left:61px;background:#1e9fff">状态</div><div class="xs" style="left:107px;background:#ff5722">删除</div></div>
</div>
<div class="row" style="top:558px;width:1361px">
<div class="c" style="left:0px;width:51px"><div class="cb"></div></div>
<div class="c" style="left:51px;width:81px">8111</div>
<div class="c" style="left:132px;width:151px">Parmigiani Fleuri…</div>
<div class="c" style="left:283px;width:151px">Parmigiani Fleuri…</div>
<div class="c" style="left:434px;width:201px">&lt;h1 id="title"&gt;Parmigiani…</div>
<div class="c" style="left:635px;width:101px">33000.00</div>
<div class="c" style="left:736px;width:101px"><div class="abs" style="left:15px;top:13px;line-height:0"><svg width="17" height="17" viewBox="0 0 17 17" style="display:block"><defs><linearGradient id="sky" x1="0" y1="0" x2="0" y2="1"><stop offset="0" stop-color="#dde8fb"/><stop offset="1" stop-color="#c2d4f2"/></linearGradient></defs><path d="M0.5 0.5H10.5L15.5 5.5V15.5H0.5Z" fill="url(#sky)" stroke="#8a8a8a" stroke-width="1"/><path d="M10.5 0.5V4.5H15.5Z" fill="#fff" stroke="#8a8a8a" stroke-width="1"/><path d="M2.2 6H8.3Q7.8 3.5 6.2 3.6Q5.2 2.6 4 4Q2.8 4.5 2.2 6Z" fill="#fff"/><path d="M1 15V14Q3.5 9.8 7.5 9.8Q10.5 9.8 12.5 12V15Z" fill="#52ab34"/><path d="M11 15Q13 12.5 15 14.2V15Z" fill="#52ab34"/><path d="M6.4 16.6L16.6 6.8V10.2L10 16.6Z" fill="#fff"/></svg></div></div>
<div class="c" style="left:837px;width:81px">1</div>
<div class="c" style="left:918px;width:101px"><div class="sw off"><div class="knob" style="left:5px;top:3px;background:#d2d2d2"></div><span class="abs" style="left:26px;top:0">下架</span></div></div>
<div class="c" style="left:1019px;width:161px">2022-06-18 22:07:47</div>
<div class="c" style="left:1180px;width:181px"><div class="xs" style="left:15px;background:#16baaa">编辑</div><div class="xs" style="left:61px;background:#1e9fff">状态</div><div class="xs" style="left:107px;background:#ff5722">删除</div></div>
</div>
<div class="row" style="top:597px;width:1361px">
<div class="c" style="left:0px;width:51px"><div class="cb"></div></div>
<div class="c" style="left:51px;width:81px">8110</div>
<div class="c" style="left:132px;width:151px">Arnold &amp; Son Me…</div>
<div class="c" style="left:283px;width:151px">Arnold &amp; Son Me…</div>
<div class="c" style="left:434px;width:201px">&lt;h1 id="title"&gt;Arnold &amp; S…</div>
<div class="c" style="left:635px;width:101px">56000.00</div>
<div class="c" style="left:736px;width:101px"><div class="abs" style="left:15px;top:13px;line-height:0"><svg width="17" height="17" viewBox="0 0 17 17" style="display:block"><defs><linearGradient id="sky" x1="0" y1="0" x2="0" y2="1"><stop offset="0" stop-color="#dde8fb"/><stop offset="1" stop-color="#c2d4f2"/></linearGradient></defs><path d="M0.5 0.5H10.5L15.5 5.5V15.5H0.5Z" fill="url(#sky)" stroke="#8a8a8a" stroke-width="1"/><path d="M10.5 0.5V4.5H15.5Z" fill="#fff" stroke="#8a8a8a" stroke-width="1"/><path d="M2.2 6H8.3Q7.8 3.5 6.2 3.6Q5.2 2.6 4 4Q2.8 4.5 2.2 6Z" fill="#fff"/><path d="M1 15V14Q3.5 9.8 7.5 9.8Q10.5 9.8 12.5 12V15Z" fill="#52ab34"/><path d="M11 15Q13 12.5 15 14.2V15Z" fill="#52ab34"/><path d="M6.4 16.6L16.6 6.8V10.2L10 16.6Z" fill="#fff"/></svg></div></div>
<div class="c" style="left:837px;width:81px">1</div>
<div class="c" style="left:918px;width:101px"><div class="sw off"><div class="knob" style="left:5px;top:3px;background:#d2d2d2"></div><span class="abs" style="left:26px;top:0">下架</span></div></div>
<div class="c" style="left:1019px;width:161px">2022-06-18 22:07:08</div>
<div class="c" style="left:1180px;width:181px"><div class="xs" style="left:15px;background:#16baaa">编辑</div><div class="xs" style="left:61px;background:#1e9fff">状态</div><div class="xs" style="left:107px;background:#ff5722">删除</div></div>
</div>
<div class="row" style="top:636px;width:1361px">
<div class="c" style="left:0px;width:51px"><div class="cb"></div></div>
<div class="c" style="left:51px;width:81px">8109</div>
<div class="c" style="left:132px;width:151px">IGI Certified 14K…</div>
<div class="c" style="left:283px;width:151px">IGI Certified 14K…</div>
<div class="c" style="left:434px;width:201px">&lt;h1 id="title"&gt;IGI Certifie…</div>
<div class="c" style="left:635px;width:101px">2577.00</div>
<div class="c" style="left:736px;width:101px"><div class="abs" style="left:15px;top:13px;line-height:0"><svg width="17" height="17" viewBox="0 0 17 17" style="display:block"><defs><linearGradient id="sky" x1="0" y1="0" x2="0" y2="1"><stop offset="0" stop-color="#dde8fb"/><stop offset="1" stop-color="#c2d4f2"/></linearGradient></defs><path d="M0.5 0.5H10.5L15.5 5.5V15.5H0.5Z" fill="url(#sky)" stroke="#8a8a8a" stroke-width="1"/><path d="M10.5 0.5V4.5H15.5Z" fill="#fff" stroke="#8a8a8a" stroke-width="1"/><path d="M2.2 6H8.3Q7.8 3.5 6.2 3.6Q5.2 2.6 4 4Q2.8 4.5 2.2 6Z" fill="#fff"/><path d="M1 15V14Q3.5 9.8 7.5 9.8Q10.5 9.8 12.5 12V15Z" fill="#52ab34"/><path d="M11 15Q13 12.5 15 14.2V15Z" fill="#52ab34"/><path d="M6.4 16.6L16.6 6.8V10.2L10 16.6Z" fill="#fff"/></svg></div></div>
<div class="c" style="left:837px;width:81px">1</div>
<div class="c" style="left:918px;width:101px"><div class="sw off"><div class="knob" style="left:5px;top:3px;background:#d2d2d2"></div><span class="abs" style="left:26px;top:0">下架</span></div></div>
<div class="c" style="left:1019px;width:161px">2022-06-18 22:03:47</div>
<div class="c" style="left:1180px;width:181px"><div class="xs" style="left:15px;background:#16baaa">编辑</div><div class="xs" style="left:61px;background:#1e9fff">状态</div><div class="xs" style="left:107px;background:#ff5722">删除</div></div>
</div>
<div class="row" style="top:675px;width:1361px">
<div class="c" style="left:0px;width:51px"><div class="cb"></div></div>
<div class="c" style="left:51px;width:81px">8108</div>
<div class="c" style="left:132px;width:151px">MSI WE76 11UK…</div>
<div class="c" style="left:283px;width:151px">MSI WE76 11UK…</div>
<div class="c" style="left:434px;width:201px">&lt;h1 id="title"&gt;MSI WE76…</div>
<div class="c" style="left:635px;width:101px">8159.00</div>
<div class="c" style="left:736px;width:101px"><div class="abs" style="left:15px;top:13px;line-height:0"><svg width="17" height="17" viewBox="0 0 17 17" style="display:block"><defs><linearGradient id="sky" x1="0" y1="0" x2="0" y2="1"><stop offset="0" stop-color="#dde8fb"/><stop offset="1" stop-color="#c2d4f2"/></linearGradient></defs><path d="M0.5 0.5H10.5L15.5 5.5V15.5H0.5Z" fill="url(#sky)" stroke="#8a8a8a" stroke-width="1"/><path d="M10.5 0.5V4.5H15.5Z" fill="#fff" stroke="#8a8a8a" stroke-width="1"/><path d="M2.2 6H8.3Q7.8 3.5 6.2 3.6Q5.2 2.6 4 4Q2.8 4.5 2.2 6Z" fill="#fff"/><path d="M1 15V14Q3.5 9.8 7.5 9.8Q10.5 9.8 12.5 12V15Z" fill="#52ab34"/><path d="M11 15Q13 12.5 15 14.2V15Z" fill="#52ab34"/><path d="M6.4 16.6L16.6 6.8V10.2L10 16.6Z" fill="#fff"/></svg></div></div>
<div class="c" style="left:837px;width:81px">1</div>
<div class="c" style="left:918px;width:101px"><div class="sw off"><div class="knob" style="left:5px;top:3px;background:#d2d2d2"></div><span class="abs" style="left:26px;top:0">下架</span></div></div>
<div class="c" style="left:1019px;width:161px">2022-06-18 22:03:00</div>
<div class="c" style="left:1180px;width:181px"><div class="xs" style="left:15px;background:#16baaa">编辑</div><div class="xs" style="left:61px;background:#1e9fff">状态</div><div class="xs" style="left:107px;background:#ff5722">删除</div></div>
</div>
<div class="row" style="top:714px;width:1361px">
<div class="c" style="left:0px;width:51px"><div class="cb"></div></div>
<div class="c" style="left:51px;width:81px">8107</div>
<div class="c" style="left:132px;width:151px">Rolex Sea Dwell…</div>
<div class="c" style="left:283px;width:151px">Rolex Sea Dwell…</div>
<div class="c" style="left:434px;width:201px">&lt;h1 id="title"&gt;Rolex Sea …</div>
<div class="c" style="left:635px;width:101px">17995.00</div>
<div class="c" style="left:736px;width:101px"><div class="abs" style="left:15px;top:13px;line-height:0"><svg width="17" height="17" viewBox="0 0 17 17" style="display:block"><defs><linearGradient id="sky" x1="0" y1="0" x2="0" y2="1"><stop offset="0" stop-color="#dde8fb"/><stop offset="1" stop-color="#c2d4f2"/></linearGradient></defs><path d="M0.5 0.5H10.5L15.5 5.5V15.5H0.5Z" fill="url(#sky)" stroke="#8a8a8a" stroke-width="1"/><path d="M10.5 0.5V4.5H15.5Z" fill="#fff" stroke="#8a8a8a" stroke-width="1"/><path d="M2.2 6H8.3Q7.8 3.5 6.2 3.6Q5.2 2.6 4 4Q2.8 4.5 2.2 6Z" fill="#fff"/><path d="M1 15V14Q3.5 9.8 7.5 9.8Q10.5 9.8 12.5 12V15Z" fill="#52ab34"/><path d="M11 15Q13 12.5 15 14.2V15Z" fill="#52ab34"/><path d="M6.4 16.6L16.6 6.8V10.2L10 16.6Z" fill="#fff"/></svg></div></div>
<div class="c" style="left:837px;width:81px">1</div>
<div class="c" style="left:918px;width:101px"><div class="sw off"><div class="knob" style="left:5px;top:3px;background:#d2d2d2"></div><span class="abs" style="left:26px;top:0">下架</span></div></div>
<div class="c" style="left:1019px;width:161px">2022-06-18 22:02:10</div>
<div class="c" style="left:1180px;width:181px"><div class="xs" style="left:15px;background:#16baaa">编辑</div><div class="xs" style="left:61px;background:#1e9fff">状态</div><div class="xs" style="left:107px;background:#ff5722">删除</div></div>
</div>
<div class="row" style="top:753px;width:1361px">
<div class="c" style="left:0px;width:51px"><div class="cb"></div></div>
<div class="c" style="left:51px;width:81px">8106</div>
<div class="c" style="left:132px;width:151px">Rolex Datejust 3…</div>
<div class="c" style="left:283px;width:151px">Rolex Datejust 3…</div>
<div class="c" style="left:434px;width:201px">&lt;h1 id="title"&gt;Rolex Date…</div>
<div class="c" style="left:635px;width:101px">40729.50</div>
<div class="c" style="left:736px;width:101px"><div class="abs" style="left:15px;top:13px;line-height:0"><svg width="17" height="17" viewBox="0 0 17 17" style="display:block"><defs><linearGradient id="sky" x1="0" y1="0" x2="0" y2="1"><stop offset="0" stop-color="#dde8fb"/><stop offset="1" stop-color="#c2d4f2"/></linearGradient></defs><path d="M0.5 0.5H10.5L15.5 5.5V15.5H0.5Z" fill="url(#sky)" stroke="#8a8a8a" stroke-width="1"/><path d="M10.5 0.5V4.5H15.5Z" fill="#fff" stroke="#8a8a8a" stroke-width="1"/><path d="M2.2 6H8.3Q7.8 3.5 6.2 3.6Q5.2 2.6 4 4Q2.8 4.5 2.2 6Z" fill="#fff"/><path d="M1 15V14Q3.5 9.8 7.5 9.8Q10.5 9.8 12.5 12V15Z" fill="#52ab34"/><path d="M11 15Q13 12.5 15 14.2V15Z" fill="#52ab34"/><path d="M6.4 16.6L16.6 6.8V10.2L10 16.6Z" fill="#fff"/></svg></div></div>
<div class="c" style="left:837px;width:81px">1</div>
<div class="c" style="left:918px;width:101px"><div class="sw off"><div class="knob" style="left:5px;top:3px;background:#d2d2d2"></div><span class="abs" style="left:26px;top:0">下架</span></div></div>
<div class="c" style="left:1019px;width:161px">2022-06-18 22:01:26</div>
<div class="c" style="left:1180px;width:181px"><div class="xs" style="left:15px;background:#16baaa">编辑</div><div class="xs" style="left:61px;background:#1e9fff">状态</div><div class="xs" style="left:107px;background:#ff5722">删除</div></div>
</div>
<div class="row" style="top:792px;width:1361px">
<div class="c" style="left:0px;width:51px"><div class="cb"></div></div>
<div class="c" style="left:51px;width:81px">8105</div>
<div class="c" style="left:132px;width:151px">Rolex Submarin…</div>
<div class="c" style="left:283px;width:151px">Rolex Submarin…</div>
<div class="c" style="left:434px;width:201px">&lt;h1 id="title"&gt;Rolex Sub…</div>
<div class="c" style="left:635px;width:101px">20842.50</div>
<div class="c" style="left:736px;width:101px"><div class="abs" style="left:15px;top:13px;line-height:0"><svg width="17" height="17" viewBox="0 0 17 17" style="display:block"><defs><linearGradient id="sky" x1="0" y1="0" x2="0" y2="1"><stop offset="0" stop-color="#dde8fb"/><stop offset="1" stop-color="#c2d4f2"/></linearGradient></defs><path d="M0.5 0.5H10.5L15.5 5.5V15.5H0.5Z" fill="url(#sky)" stroke="#8a8a8a" stroke-width="1"/><path d="M10.5 0.5V4.5H15.5Z" fill="#fff" stroke="#8a8a8a" stroke-width="1"/><path d="M2.2 6H8.3Q7.8 3.5 6.2 3.6Q5.2 2.6 4 4Q2.8 4.5 2.2 6Z" fill="#fff"/><path d="M1 15V14Q3.5 9.8 7.5 9.8Q10.5 9.8 12.5 12V15Z" fill="#52ab34"/><path d="M11 15Q13 12.5 15 14.2V15Z" fill="#52ab34"/><path d="M6.4 16.6L16.6 6.8V10.2L10 16.6Z" fill="#fff"/></svg></div></div>
<div class="c" style="left:837px;width:81px">1</div>
<div class="c" style="left:918px;width:101px"><div class="sw off"><div class="knob" style="left:5px;top:3px;background:#d2d2d2"></div><span class="abs" style="left:26px;top:0">下架</span></div></div>
<div class="c" style="left:1019px;width:161px">2022-06-18 22:00:27</div>
<div class="c" style="left:1180px;width:181px"><div class="xs" style="left:15px;background:#16baaa">编辑</div><div class="xs" style="left:61px;background:#1e9fff">状态</div><div class="xs" style="left:107px;background:#ff5722">删除</div></div>
</div>
<div class="row" style="top:831px;width:1361px">
<div class="c" style="left:0px;width:51px"><div class="cb"></div></div>
<div class="c" style="left:51px;width:81px">8104</div>
<div class="c" style="left:132px;width:151px">Huxters Funny C…</div>
<div class="c" style="left:283px;width:151px">Huxters Funny C…</div>
<div class="c" style="left:434px;width:201px">&lt;h1 id="title"&gt;Huxters Fu…</div>
<div class="c" style="left:635px;width:101px">6.99</div>
<div class="c" style="left:736px;width:101px"><div class="abs" style="left:15px;top:13px;line-height:0"><svg width="17" height="17" viewBox="0 0 17 17" style="display:block"><defs><linearGradient id="sky" x1="0" y1="0" x2="0" y2="1"><stop offset="0" stop-color="#dde8fb"/><stop offset="1" stop-color="#c2d4f2"/></linearGradient></defs><path d="M0.5 0.5H10.5L15.5 5.5V15.5H0.5Z" fill="url(#sky)" stroke="#8a8a8a" stroke-width="1"/><path d="M10.5 0.5V4.5H15.5Z" fill="#fff" stroke="#8a8a8a" stroke-width="1"/><path d="M2.2 6H8.3Q7.8 3.5 6.2 3.6Q5.2 2.6 4 4Q2.8 4.5 2.2 6Z" fill="#fff"/><path d="M1 15V14Q3.5 9.8 7.5 9.8Q10.5 9.8 12.5 12V15Z" fill="#52ab34"/><path d="M11 15Q13 12.5 15 14.2V15Z" fill="#52ab34"/><path d="M6.4 16.6L16.6 6.8V10.2L10 16.6Z" fill="#fff"/></svg></div></div>
<div class="c" style="left:837px;width:81px">1</div>
<div class="c" style="left:918px;width:101px"><div class="sw off"><div class="knob" style="left:5px;top:3px;background:#d2d2d2"></div><span class="abs" style="left:26px;top:0">下架</span></div></div>
<div class="c" style="left:1019px;width:161px">2022-06-18 21:59:40</div>
<div class="c" style="left:1180px;width:181px"><div class="xs" style="left:15px;background:#16baaa">编辑</div><div class="xs" style="left:61px;background:#1e9fff">状态</div><div class="xs" style="left:107px;background:#ff5722">删除</div></div>
</div>
<div class="abs" style="left:0;top:869px;width:1627px;height:1px;background:#eee"></div>
<div class="abs" style="left:132px;top:51px;width:8px;height:819px;background:linear-gradient(to right,rgba(0,0,0,.05),rgba(0,0,0,0))"></div>
</div>
<div class="abs" style="left:299px;top:1129px"><svg width="13" height="16" viewBox="0 0 13 16" style="display:block"><rect x="0" y="0" width="13" height="1.6" fill="#d2d2d2"/><rect x="0" y="14.4" width="13" height="1.6" fill="#d2d2d2"/><rect x="0" y="0" width="1" height="16" fill="#d2d2d2"/><rect x="12" y="0" width="1" height="16" fill="#d2d2d2"/><path d="M1 1.2L12 14.8M12 1.2L1 14.8" stroke="#d2d2d2" stroke-width="0.9"/></svg></div>
<div class="abs" style="left:324px;top:1123px;width:31px;height:28px;background:#16baaa;color:#fff;font-size:12px;line-height:28px;text-align:center;border-radius:2px">1</div>
<div class="pg" style="left:365px">2</div>
<div class="pg" style="left:395px">3</div>
<div class="pg" style="left:413px">…</div>
<div class="pg" style="left:434px">326</div>
<div class="abs" style="left:479px;top:1129px"><svg width="13" height="16" viewBox="0 0 13 16" style="display:block"><rect x="0" y="0" width="13" height="1.6" fill="#333"/><rect x="0" y="14.4" width="13" height="1.6" fill="#333"/><rect x="0" y="0" width="1" height="16" fill="#333"/><rect x="12" y="0" width="1" height="16" fill="#333"/><path d="M1 1.2L12 14.8M12 1.2L1 14.8" stroke="#333" stroke-width="0.9"/></svg></div>
<div class="pg" style="left:504px;color:#999">到第</div>
<div class="abs" style="left:538px;top:1123px;width:40px;height:30px;border:1px solid #e2e2e2;border-radius:2px;text-align:center;font-size:12px;line-height:26px;color:#333">1</div>
<div class="pg" style="left:588px;color:#999">页</div>
<div class="abs" style="left:610px;top:1123px;width:46px;height:30px;border:1px solid #e2e2e2;border-radius:2px;text-align:center;font-size:12px;line-height:28px;color:#999">确定</div>
<div class="pg" style="left:666px">共 6512 条</div>
<div class="abs" style="left:733px;top:1123px;width:79px;height:30px;border:1px solid #e2e2e2;border-radius:2px;font-size:12px;line-height:26px;color:#333;padding-left:7px">20 条/页<svg class="abs" style="left:64px;top:11px" width="10" height="6" viewBox="0 0 10 6"><path d="M1 1L5 5L9 1" fill="none" stroke="#222" stroke-width="1.6"/></svg></div>
<svg class="abs" style="left:0;top:0;z-index:40;pointer-events:none" width="1938" height="1145" viewBox="0 0 1938 1145"><circle cx="969.4" cy="572.5" r="139.9" fill="none" stroke="#ff0000" stroke-width="5.3"/><text transform="translate(969.4,572.5) rotate(258.000) translate(0,-106.5) scale(0.66,1)" text-anchor="middle" font-family="Liberation Sans" font-weight="bold" font-size="28" fill="#ff0000" stroke="#ff0000" stroke-width="0.6">w</text><text transform="translate(969.4,572.5) rotate(274.125) translate(0,-106.5) scale(0.66,1)" text-anchor="middle" font-family="Liberation Sans" font-weight="bold" font-size="28" fill="#ff0000" stroke="#ff0000" stroke-width="0.6">w</text><text transform="translate(969.4,572.5) rotate(290.250) translate(0,-106.5) scale(0.66,1)" text-anchor="middle" font-family="Liberation Sans" font-weight="bold" font-size="28" fill="#ff0000" stroke="#ff0000" stroke-width="0.6">w</text><text transform="translate(969.4,572.5) rotate(304.175) translate(0,-106.5) scale(1.0,1)" text-anchor="middle" font-family="Liberation Sans" font-weight="normal" font-size="28" fill="#ff0000">.</text><text transform="translate(969.4,572.5) rotate(322.500) translate(0,-106.5) scale(1.0,1)" text-anchor="middle" font-family="Liberation Sans" font-weight="normal" font-size="28" fill="#ff0000" stroke="#ff0000" stroke-width="0.7">5</text><text transform="translate(969.4,572.5) rotate(338.625) translate(0,-106.5) scale(1.0,1)" text-anchor="middle" font-family="Liberation Sans" font-weight="normal" font-size="28" fill="#ff0000" stroke="#ff0000" stroke-width="0.7">1</text><text transform="translate(969.4,572.5) rotate(354.750) translate(0,-106.5) scale(1.0,1)" text-anchor="middle" font-family="Liberation Sans" font-weight="normal" font-size="28" fill="#ff0000" stroke="#ff0000" stroke-width="0.7">5</text><text transform="translate(969.4,572.5) rotate(370.875) translate(0,-106.5) scale(0.88,1)" text-anchor="middle" font-family="Liberation Sans" font-weight="normal" font-size="28" fill="#ff0000" stroke="#ff0000" stroke-width="0.7">y</text><text transform="translate(969.4,572.5) rotate(387.000) translate(0,-106.5) scale(0.68,1)" text-anchor="middle" font-family="Liberation Sans" font-weight="bold" font-size="28" fill="#ff0000" stroke="#ff0000" stroke-width="0.6">m</text><text transform="translate(969.4,572.5) rotate(400.925) translate(0,-106.5) scale(1.0,1)" text-anchor="middle" font-family="Liberation Sans" font-weight="normal" font-size="28" fill="#ff0000">.</text><text transform="translate(969.4,572.5) rotate(419.250) translate(0,-106.5) scale(0.84,1)" text-anchor="middle" font-family="Liberation Sans" font-weight="bold" font-size="28" fill="#ff0000" stroke="#ff0000" stroke-width="0.6">c</text><text transform="translate(969.4,572.5) rotate(435.375) translate(0,-106.5) scale(0.88,1)" text-anchor="middle" font-family="Liberation Sans" font-weight="bold" font-size="28" fill="#ff0000" stroke="#ff0000" stroke-width="0.6">o</text><text transform="translate(969.4,572.5) rotate(451.500) translate(0,-106.5) scale(0.68,1)" text-anchor="middle" font-family="Liberation Sans" font-weight="bold" font-size="28" fill="#ff0000" stroke="#ff0000" stroke-width="0.6">m</text><text transform="translate(969.4,572.5) rotate(27.400) translate(0,130.5) scale(1.0,1)" text-anchor="middle" font-family="Liberation Sans" font-size="14" fill="#ff0000">5</text><text transform="translate(969.4,572.5) rotate(20.800) translate(0,130.5) scale(1.0,1)" text-anchor="middle" font-family="Liberation Sans" font-size="14" fill="#ff0000">1</text><text transform="translate(969.4,572.5) rotate(14.200) translate(0,130.5) scale(1.0,1)" text-anchor="middle" font-family="Liberation Sans" font-size="14" fill="#ff0000">5</text><text transform="translate(969.4,572.5) rotate(7.600) translate(0,130.5) scale(0.88,1)" text-anchor="middle" font-family="Liberation Sans" font-size="14" fill="#ff0000">y</text><text transform="translate(969.4,572.5) rotate(1.000) translate(0,130.5) scale(0.68,1)" text-anchor="middle" font-family="Liberation Sans" font-size="14" fill="#ff0000">m</text><text transform="translate(969.4,572.5) rotate(-5.600) translate(0,130.5) scale(1.0,1)" text-anchor="middle" font-family="Liberation Sans" font-size="14" fill="#ff0000">.</text><text transform="translate(969.4,572.5) rotate(-12.200) translate(0,130.5) scale(0.84,1)" text-anchor="middle" font-family="Liberation Sans" font-size="14" fill="#ff0000">c</text><text transform="translate(969.4,572.5) rotate(-18.800) translate(0,130.5) scale(0.88,1)" text-anchor="middle" font-family="Liberation Sans" font-size="14" fill="#ff0000">o</text><text transform="translate(969.4,572.5) rotate(-25.400) translate(0,130.5) scale(0.68,1)" text-anchor="middle" font-family="Liberation Sans" font-size="14" fill="#ff0000">m</text><text transform="translate(894.5,585.5) scale(1.075,1)" font-family="Liberation Sans" font-size="38" fill="#ff0000">515</text><text transform="translate(966,585) skewX(-12)" font-family="Liberation Sans" font-size="37" fill="#ff0000" stroke="#ff0000" stroke-width="0.8">源码</text><text transform="translate(902.5,652.3) scale(1.0,1)" text-anchor="middle" font-family="Liberation Sans" font-weight="bold" font-size="28" fill="#ff0000">5</text><text transform="translate(918.3,652.3) scale(1.0,1)" text-anchor="middle" font-family="Liberation Sans" font-weight="bold" font-size="28" fill="#ff0000">1</text><text transform="translate(936.5,652.3) scale(1.0,1)" text-anchor="middle" font-family="Liberation Sans" font-weight="bold" font-size="28" fill="#ff0000">5</text><text transform="translate(954.2,652.3) scale(0.83,1)" text-anchor="middle" font-family="Liberation Sans" font-weight="bold" font-size="28" fill="#ff0000">y</text><text transform="translate(970.1,652.3) scale(0.68,1)" text-anchor="middle" font-family="Liberation Sans" font-weight="bold" font-size="28" fill="#ff0000">m</text><text transform="translate(984.3,652.3) scale(1.0,1)" text-anchor="middle" font-family="Liberation Sans" font-weight="bold" font-size="28" fill="#ff0000">.</text><text transform="translate(1003.75,652.3) scale(0.86,1)" text-anchor="middle" font-family="Liberation Sans" font-weight="bold" font-size="28" fill="#ff0000">c</text><text transform="translate(1021.7,652.3) scale(0.9,1)" text-anchor="middle" font-family="Liberation Sans" font-weight="bold" font-size="28" fill="#ff0000">o</text><text transform="translate(1038.85,652.3) scale(0.68,1)" text-anchor="middle" font-family="Liberation Sans" font-weight="bold" font-size="28" fill="#ff0000">m</text></svg>
</body></html>
